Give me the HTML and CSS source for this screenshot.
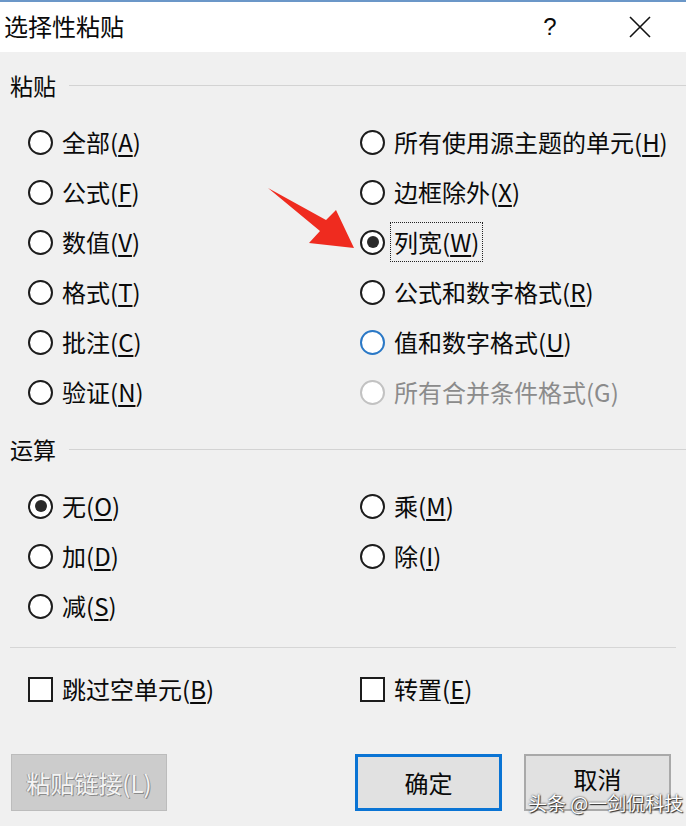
FILE: index.html
```html
<!DOCTYPE html>
<html lang="zh-CN">
<head>
  <meta charset="UTF-8">
  <title>选择性粘贴</title>
  <link rel="stylesheet" href="styles.css">
</head>
<body>
  <div class="dialog">
    <!-- 标题栏 -->
    <div class="titlebar">
      <span class="title">选择性粘贴</span>
      <span class="help">?</span>
      <span class="close">
        <svg width="22" height="22" viewBox="0 0 22 22"><path d="M1 1L21 21M21 1L1 21" stroke="#111" stroke-width="1.6" fill="none"/></svg>
      </span>
    </div>

    <div class="content">
      <!-- 粘贴 -->
      <div class="group-label">粘贴</div>
      <div class="options paste">
        <div class="opt"><span class="radio"></span><span class="text">全部(<u>A</u>)</span></div>
        <div class="opt"><span class="radio"></span><span class="text">所有使用源主题的单元(<u>H</u>)</span></div>
        <div class="opt"><span class="radio"></span><span class="text">公式(<u>F</u>)</span></div>
        <div class="opt"><span class="radio"></span><span class="text">边框除外(<u>X</u>)</span></div>
        <div class="opt"><span class="radio"></span><span class="text">数值(<u>V</u>)</span></div>
        <div class="opt"><span class="radio checked"></span><span class="text focus">列宽(<u>W</u>)</span></div>
        <div class="opt"><span class="radio"></span><span class="text">格式(<u>T</u>)</span></div>
        <div class="opt"><span class="radio"></span><span class="text">公式和数字格式(<u>R</u>)</span></div>
        <div class="opt"><span class="radio"></span><span class="text">批注(<u>C</u>)</span></div>
        <div class="opt"><span class="radio hover"></span><span class="text">值和数字格式(<u>U</u>)</span></div>
        <div class="opt"><span class="radio"></span><span class="text">验证(<u>N</u>)</span></div>
        <div class="opt disabled"><span class="radio"></span><span class="text">所有合并条件格式(G)</span></div>
      </div>

      <!-- 运算 -->
      <div class="group-label ops-label">运算</div>
      <div class="options ops">
        <div class="opt"><span class="radio checked"></span><span class="text">无(<u>O</u>)</span></div>
        <div class="opt"><span class="radio"></span><span class="text">乘(<u>M</u>)</span></div>
        <div class="opt"><span class="radio"></span><span class="text">加(<u>D</u>)</span></div>
        <div class="opt"><span class="radio"></span><span class="text">除(<u>I</u>)</span></div>
        <div class="opt"><span class="radio"></span><span class="text">减(<u>S</u>)</span></div>
      </div>

      <div class="separator"></div>

      <div class="options checks">
        <div class="opt"><span class="checkbox"></span><span class="text">跳过空单元(<u>B</u>)</span></div>
        <div class="opt"><span class="checkbox"></span><span class="text">转置(<u>E</u>)</span></div>
      </div>

      <!-- 按钮 -->
      <div class="buttons">
        <button class="btn btn-disabled">粘贴链接(L)</button>
        <div class="btn-group">
          <button class="btn btn-default">确定</button>
          <button class="btn btn-cancel">取消</button>
        </div>
      </div>
    </div>

    <!-- 红色箭头 -->
    <svg class="arrow" width="100" height="70" viewBox="265 185 100 70">
      <polygon points="268,188 326,220 336,210 354,248 309,243 320,231" fill="#ef2b1f"/>
    </svg>

    <div class="watermark">头条 @一剑侃科技</div>
  </div>
</body>
</html>
```

FILE: styles.css
```css
/* 基础 */
* {
  margin: 0;
  padding: 0;
  box-sizing: border-box;
}

body {
  background: #f0f0f0;
  font-family: "Microsoft YaHei", "Noto Sans CJK SC", sans-serif;
  color: #0a0a0a;
  width: 686px;
  height: 826px;
  overflow: hidden;
}

.dialog {
  position: relative;
  height: 826px;
}

/* 标题栏 */
.titlebar {
  height: 52px;
  background: #fff;
  border-top: 2px solid #6b97c8;
  display: flex;
  align-items: center;
}

.title {
  font-size: 24px;
  padding-left: 4px;
  margin-top: -4px;
}

.help {
  margin-left: auto;
  width: 40px;
  text-align: center;
  font-size: 24px;
  font-family: "Liberation Sans", sans-serif;
  margin-right: 50px;
}

.close {
  width: 40px;
  margin-right: 26px;
  display: flex;
  justify-content: center;
}

/* 内容 */
.content {
  padding-left: 10px;
}

.group-label {
  display: flex;
  align-items: center;
  height: 30px;
  margin-top: 18px;
  font-size: 23px;
}

.group-label::after {
  content: "";
  flex: 1;
  height: 1px;
  background: #d3d3d3;
  margin-left: 13px;
}

.ops-label {
  margin-top: 17px;
}

.options {
  display: grid;
  grid-template-columns: 332px 1fr;
  padding-left: 18px;
  margin-top: 17px;
}

.ops {
  margin-top: 17px;
}

.opt {
  display: flex;
  align-items: center;
  height: 50px;
  font-size: 24px;
}

.text {
  padding: 0 3px;
  height: 40px;
  line-height: 38px;
  border: 1px solid transparent;
  margin-left: 5px;
}

.text u {
  text-decoration-thickness: 2px;
  text-underline-offset: 3px;
}

.text.focus {
  border: 1px dotted #222;
}

.radio {
  width: 25px;
  height: 25px;
  border: 2px solid #1c1c1c;
  border-radius: 50%;
  background: #fff;
  display: flex;
  align-items: center;
  justify-content: center;
}

.radio.checked::after {
  content: "";
  width: 12px;
  height: 12px;
  border-radius: 50%;
  background: #2a2a2a;
}

.radio.hover {
  border-color: #2a78c6;
}

.opt.disabled .radio {
  border-color: #c2c2c2;
}

.opt.disabled .text {
  color: #8b8b8b;
}

.separator {
  height: 1px;
  background: #d6d6d6;
  margin: 16px 10px 0 0;
}

.checks {
  margin-top: 16px;
}

.checkbox {
  width: 25px;
  height: 25px;
  border: 2px solid #1c1c1c;
  background: #fff;
}

/* 按钮 */
.buttons {
  display: flex;
  align-items: center;
  margin-top: 40px;
  padding-right: 15px;
}

.btn {
  font-family: inherit;
  font-size: 24px;
  height: 57px;
  width: 147px;
  background: #e1e1e1;
  border: 2px solid #a9a9a9;
  color: #0a0a0a;
}

.btn-disabled {
  width: 156px;
  margin-left: 1px;
  background: #cccccc;
  border: 1px solid #bcbcbc;
  color: #f4f4f4;
  text-shadow: 1px 1px 0 #8a8a8a, -1px 0 0 #9a9a9a;
}

.btn-group {
  margin-left: auto;
  display: flex;
  gap: 22px;
}

.btn-default {
  border: 3px solid #0a74d4;
}

.btn-cancel {
  padding-bottom: 8px;
}

/* 覆盖层 */
.arrow {
  position: absolute;
  left: 265px;
  top: 185px;
}

.watermark {
  position: absolute;
  left: 528px;
  top: 789px;
  font-size: 19px;
  color: #fff;
  text-shadow: 0 0 2px #222, 1px 1px 1px #333;
  white-space: nowrap;
}
```
